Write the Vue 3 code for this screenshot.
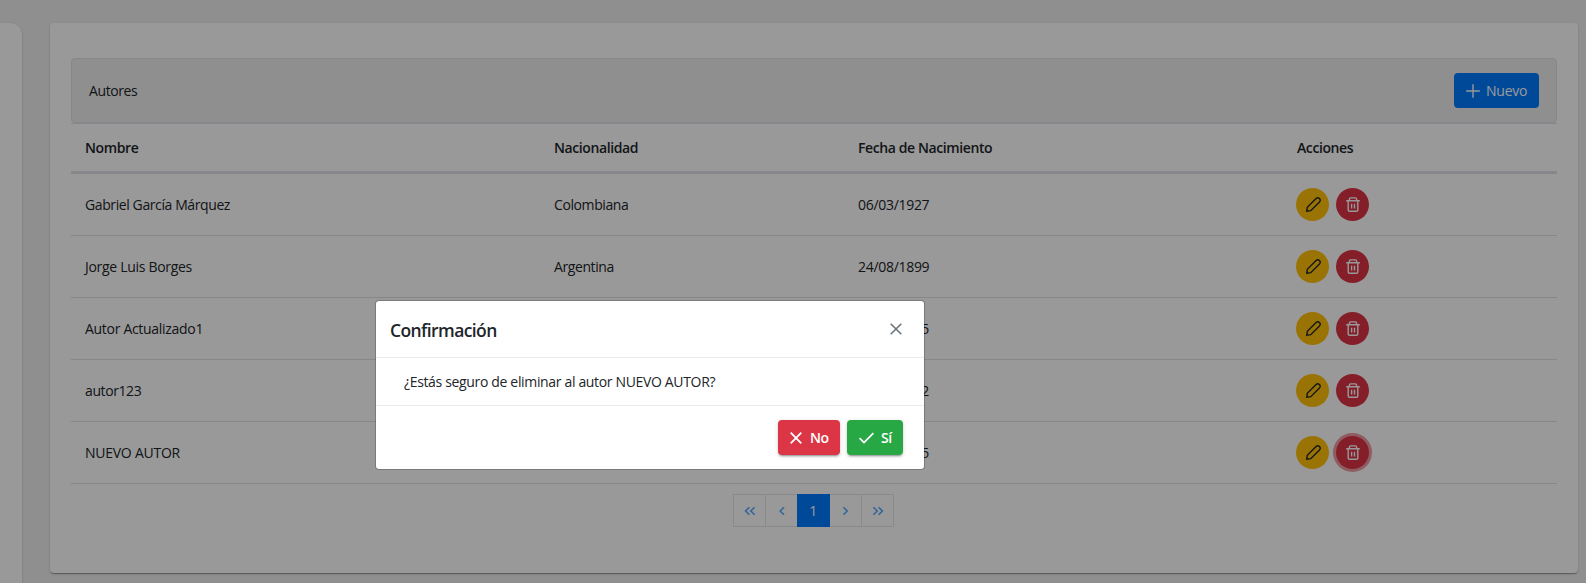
<script setup>
const authors = [
  { name: 'Gabriel García Márquez', country: 'Colombiana', born: '06/03/1927' },
  { name: 'Jorge Luis Borges', country: 'Argentina', born: '24/08/1899', wide: true },
  { name: 'Autor Actualizado1', country: '', born: '5', wide: true },
  { name: 'autor123', country: '', born: '2' },
  { name: 'NUEVO AUTOR', country: '', born: '5', caps: true, focused: true },
]
</script>

<template>
  <div class="page">
    <aside class="sidebar"></aside>
    <main class="card">
      <div class="toolbar">
        <span>Autores</span>
        <button class="btn primary">
          <svg width="14" height="14" viewBox="0 0 14 14"><path d="M7 .2v13.6M.2 7h13.6" /></svg>
          <span>Nuevo</span>
        </button>
      </div>

      <table>
        <thead>
          <tr>
            <th class="c-name">Nombre</th>
            <th class="c-country">Nacionalidad</th>
            <th class="c-date">Fecha de Nacimiento</th>
            <th>Acciones</th>
          </tr>
        </thead>
        <tbody>
          <tr v-for="a in authors" :key="a.name">
            <td :class="{ caps: a.caps, wide: a.wide }">{{ a.name }}</td>
            <td>{{ a.country }}</td>
            <td class="date"><span class="born">{{ a.born }}</span></td>
            <td>
              <div class="actions">
                <button class="round warn">
                  <svg width="15" height="15" viewBox="0 0 15 15">
                    <path d="M.8 14.2 1.3 10.3 10.1 1.5Q11.8 0 13.4 1.6T13.5 4.9L4.7 13.7Z" />
                  </svg>
                </button>
                <button class="round danger" :class="{ focused: a.focused }">
                  <svg width="14" height="15" viewBox="0 0 14 15">
                    <path d="M.2 3.8h13.6M3.4 3.6V2.2Q3.4.9 4.7.9h4.6q1.3 0 1.3 1.3v1.4M2.2 4v9q0 1.3 1.3 1.3h7q1.3 0 1.3-1.3V4M5.6 6.7v4.9M8.5 6.7v4.9" />
                  </svg>
                </button>
              </div>
            </td>
          </tr>
        </tbody>
      </table>

      <nav class="paginator">
        <span class="pg"><svg width="12" height="10" viewBox="0 0 12 10"><path d="M5.4 1.2 1.6 5l3.8 3.8M10.6 1.2 6.8 5l3.8 3.8" /></svg></span>
        <span class="pg"><svg width="12" height="10" viewBox="0 0 12 10"><path d="M8 1.2 4.2 5 8 8.8" /></svg></span>
        <span class="pg active">1</span>
        <span class="pg"><svg width="12" height="10" viewBox="0 0 12 10"><path d="M3.4 1.2 7.2 5 3.4 8.8" /></svg></span>
        <span class="pg"><svg width="12" height="10" viewBox="0 0 12 10"><path d="M1.4 1.2 5.2 5 1.4 8.8M6.6 1.2 10.4 5 6.6 8.8" /></svg></span>
      </nav>
    </main>

    <div class="mask">
      <section class="dialog">
        <header>
          <h2>Confirmación</h2>
          <svg class="close" width="12" height="12" viewBox="0 0 12 12"><path d="M.7.7l10.6 10.6M11.3.7.7 11.3" /></svg>
        </header>
        <p>¿Estás seguro de eliminar al autor NUEVO AUTOR?</p>
        <footer>
          <button class="btn no">
            <svg width="12" height="12" viewBox="0 0 12 12"><path d="M.7.7l10.6 10.6M11.3.7.7 11.3" /></svg>
            <span>No</span>
          </button>
          <button class="btn yes">
            <svg width="15" height="12" viewBox="0 0 15 12"><path d="M.6 6.2 5 10.6 14.4 1.2" /></svg>
            <span>Sí</span>
          </button>
        </footer>
      </section>
    </div>
  </div>
</template>

<style>
body { background: #efefef; overflow: hidden; }
</style>

<style scoped>
* { box-sizing: border-box; }
.page {
  position: relative;
  width: 1586px;
  height: 583px;
  overflow: hidden;
  display: flex;
  align-items: flex-start;
  gap: 28px;
  padding-top: 23px;
  background: #efefef;
  color: #212529;
  font: 14px/21px "Open Sans", "Noto Sans", sans-serif;
  letter-spacing: -0.4px;
}
svg { fill: none; stroke: currentColor; flex: none; display: block; }
button { font: inherit; letter-spacing: inherit; border: 0; padding: 0; }
.sidebar {
  width: 22px;
  height: 600px;
  background: #fff;
  border-radius: 0 12px 0 0;
  box-shadow: 0 3px 5px rgba(0, 0, 0, .02), 0 0 2px rgba(0, 0, 0, .05), 0 1px 4px rgba(0, 0, 0, .08);
}
.card {
  width: 1528px;
  height: 550px;
  padding: 35px 21px 0;
  background: #fff;
  border-radius: 4px;
  box-shadow: 0 2px 1px -1px rgba(0, 0, 0, .2), 0 1px 1px rgba(0, 0, 0, .14), 0 1px 3px rgba(0, 0, 0, .12);
}
.toolbar {
  height: 65px;
  display: flex;
  align-items: center;
  justify-content: space-between;
  padding: 0 17px;
  background: #efefef;
  border: 1px solid #dee2e6;
  border-radius: 4px;
}
.btn {
  height: 35px;
  display: flex;
  align-items: center;
  border-radius: 4px;
  color: #fff;
}
.primary { width: 85px; padding-left: 12px; gap: 6px; background: #007bff; letter-spacing: -0.25px; }
.primary svg { stroke-width: 1.4; }
table { width: 1486px; table-layout: fixed; border-collapse: separate; border-spacing: 0; }
th {
  height: 51px;
  padding: 0 14px;
  text-align: left;
  font-weight: 600;
  border-top: 1px solid #dee2e6;
  border-bottom: 3px solid #dee2e6;
}
.c-name { width: 469px; }
.c-country { width: 304px; }
.c-date { width: 439px; }
td { height: 62px; padding: 0 14px; border-bottom: 1px solid #dee2e6; }
td.date { letter-spacing: -0.3px; }
td.wide { letter-spacing: -0.3px; }
td.caps { letter-spacing: -0.25px; }
.born { display: block; width: 71px; text-align: right; white-space: nowrap; }
.actions { display: flex; gap: 7px; margin-left: -1px; }
.round {
  width: 33px;
  height: 33px;
  border-radius: 50%;
  display: flex;
  align-items: center;
  justify-content: center;
}
.round svg { stroke-width: 1.4; margin-top: -1px; margin-left: 1px; }
.warn { background: #ffc107; color: #212529; }
.danger { background: #dc3545; color: #fff; }
.focused { box-shadow: 0 0 0 3px rgba(220, 53, 69, .5); }
.paginator { display: flex; justify-content: center; margin-top: 10px; padding-right: 3px; }
.pg {
  width: 33px;
  height: 33px;
  margin-right: -1px;
  display: flex;
  align-items: center;
  justify-content: center;
  border: 1px solid #e3e6e9;
  color: #007bff;
}
.pg svg { stroke-width: 1.6; margin-left: 2px; opacity: .65; }
.pg.active { position: relative; background: #007bff; border-color: #007bff; color: #fff; }
.mask { position: absolute; inset: 0; background: rgba(0, 0, 0, .4); }
.dialog {
  position: absolute;
  left: 375px;
  top: 300px;
  width: 550px;
  height: 170px;
  background: #fff;
  background-clip: padding-box;
  border: 1px solid rgba(0, 0, 0, .2);
  border-radius: 4px;
}
.dialog header {
  height: 57px;
  display: flex;
  align-items: center;
  justify-content: space-between;
  padding: 0 22px 0 14px;
  border-bottom: 1px solid #e9ecef;
}
h2 { margin: 1px 0 0; font-size: 17.5px; line-height: 26px; font-weight: 600; letter-spacing: -0.6px; }
.close { color: #6c757d; stroke-width: 1.6; }
.dialog p { margin: 0; height: 48px; padding: 13px 28px 0; line-height: 21px; letter-spacing: -0.34px; border-bottom: 1px solid #e9ecef; }
.dialog footer { display: flex; justify-content: flex-end; gap: 7px; padding: 14px 21px 0 0; }
.no, .yes {
  padding-left: 12px;
  gap: 8px;
  font-weight: 600;
  box-shadow: 0 3px 1px -2px rgba(0, 0, 0, .2), 0 2px 2px rgba(0, 0, 0, .14), 0 1px 5px rgba(0, 0, 0, .12);
}
.no svg, .yes svg { stroke-width: 1.8; }
.no { width: 62px; background: #dc3545; }
.yes { width: 56px; background: #28a745; gap: 7px; }
</style>
